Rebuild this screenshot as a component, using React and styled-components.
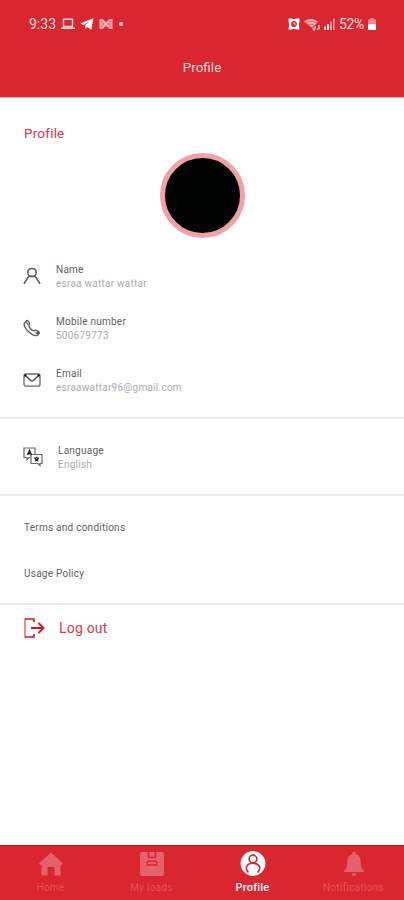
import React from 'react';
import styled, { createGlobalStyle } from 'styled-components';

const theme = {
  red: '#d9262f',
  edge: '#cb0b16',
  accent: '#d63a4c',
  label: '#606164',
  muted: '#a9adb5',
  line: '#ebebec',
  faded: '#e5626a',
};

const GlobalStyle = createGlobalStyle`
  * {
    box-sizing: border-box;
  }

  body {
    margin: 0;
    background: #fefefe;
    font-family: Roboto, 'Liberation Sans', sans-serif;
  }

  svg {
    display: block;
    flex-shrink: 0;
  }
`;

const Screen = styled.div`
  display: flex;
  flex-direction: column;
  width: 404px;
  height: 900px;
  overflow: hidden;
`;

const Header = styled.header`
  height: 98px;
  background: ${theme.red};
  border-bottom: 1px solid #f3aeb2;
  color: #fbdcde;
`;

const StatusBar = styled.div`
  display: flex;
  align-items: center;
  justify-content: space-between;
  height: 48px;
  padding: 0 28px 0 29px;
`;

const StatusGroup = styled.div`
  display: flex;
  align-items: center;
  gap: ${({ $gap }) => $gap}px;
`;

const StatusText = styled.span`
  font-size: 14px;
  line-height: 16px;
  letter-spacing: ${({ $tracking }) => $tracking || 0}px;
`;

const StatusDot = styled.span`
  width: 4px;
  height: 4px;
  margin-left: 1px;
  border-radius: 50%;
  background: currentColor;
`;

const HeaderTitle = styled.h1`
  margin: 0;
  text-align: center;
  font-size: 13.5px;
  font-weight: 400;
  line-height: 38px;
`;

const Content = styled.main`
  flex: 1;
`;

const PageTitle = styled.h2`
  margin: 0;
  padding: 27px 24px 12px;
  color: ${theme.accent};
  font-size: 13.5px;
  font-weight: 400;
  line-height: 16px;
  letter-spacing: 0.2px;
`;

const Avatar = styled.div`
  width: 85px;
  height: 85px;
  margin: 0 auto;
  border: 5px solid #f0a0a6;
  border-radius: 50%;
  background: #010403;
`;

const Section = styled.section`
  padding: ${({ $padding }) => $padding};
  border-bottom: 2px solid ${theme.line};
`;

const Row = styled.div`
  display: flex;
  align-items: center;
  gap: 15px;
  height: 52px;
`;

const RowText = styled.div`
  padding-top: 2px;
`;

const RowLabel = styled.div`
  color: ${theme.label};
  font-size: 10px;
  line-height: 14px;
  letter-spacing: 0.25px;
`;

const RowValue = styled(RowLabel)`
  color: ${theme.muted};
`;

const LinkRow = styled.div`
  display: flex;
  align-items: center;
  height: 46px;
  color: ${theme.label};
  font-size: 10px;
  letter-spacing: 0.25px;
`;

const LogoutRow = styled.div`
  display: flex;
  align-items: center;
  gap: 14px;
  height: 46px;
  padding: 0 23px;
  color: ${theme.accent};
  font-size: 14px;
  letter-spacing: 0.2px;
`;

const TabBar = styled.nav`
  display: grid;
  grid-template-columns: repeat(4, 1fr);
  height: 55px;
  background: ${theme.red};
  border-top: 1px solid ${theme.edge};
`;

const Tab = styled.div`
  display: flex;
  flex-direction: column;
  align-items: center;
  padding-top: 4px;
  color: ${({ $active }) => ($active ? '#fff' : theme.faded)};
`;

const TabLabel = styled.span`
  margin-top: 3px;
  font-size: ${({ $active }) => ($active ? 11 : 10)}px;
  font-weight: ${({ $active }) => ($active ? 500 : 400)};
  line-height: 14px;
  letter-spacing: ${({ $active }) => ($active ? 0.2 : 0.3)}px;
  opacity: ${({ $active }) => ($active ? 1 : 0.75)};
`;

const LaptopIcon = () => (
  <svg width="14" height="12" viewBox="0 0 14 12" fill="none" stroke="currentColor" strokeWidth="1.4">
    <path d="M2.5 1.2h9v7.3h-9zM0 10.3h14" />
  </svg>
);

const TelegramIcon = () => (
  <svg width="14" height="12" viewBox="0 0 14 12" fill="#fff">
    <path d="M0 5.5 13.5.3 11.2 11.8 7.3 9 5.4 11 5 7.5 10 3.1 3.8 6.9z" />
  </svg>
);

const MailBadgeIcon = () => (
  <svg width="14" height="12" viewBox="0 0 14 12">
    <path d="M.5 1h3l3.5 3 3.5-3h3v10h-3L7 8l-3.5 3h-3z" fill="currentColor" opacity=".75" />
    <path d="M3 2.5v7M11 2.5v7M4.8 4.5v3M9.2 4.5v3" stroke={theme.red} strokeWidth=".5" />
  </svg>
);

const AlarmIcon = () => (
  <svg width="12" height="12" viewBox="0 0 12 12">
    <path d="M.5.5h3L6 1.2 8.5.5h3v3l-.7 2.5.7 5.5h-3l-2.5-.7-2.5.7h-3L1.2 6 .5 3.5z" fill="#fff" />
    <circle cx="6" cy="6" r="2.9" fill={theme.red} />
    <path d="M6 4.2V6h1.8" fill="none" stroke="#fff" strokeWidth="1" />
  </svg>
);

const WifiIcon = () => (
  <svg width="16" height="13" viewBox="0 0 16 13">
    <path d="M0 3.5Q7-2 14 3.5L11.5 6.2 8 9.8z" fill="currentColor" opacity=".75" />
    <path d="M1.7 5.2Q7 1.7 12 5M4 7.2Q7 5.2 10 7" fill="none" stroke={theme.red} strokeWidth=".5" />
    <path d="m8.5 10 2 2 1-3.5M15 7v3.5l-2 1" fill="none" stroke="currentColor" strokeWidth="1.3" />
  </svg>
);

const SignalIcon = () => (
  <svg width="11" height="12" viewBox="0 0 11 12" fill="currentColor">
    <path d="M0 8.5h2V12H0zM3 6h2v6H3z" />
    <path d="M6 3.5h2V12H6zM9 .5h1.6V12H9z" opacity=".65" />
  </svg>
);

const BatteryIcon = () => (
  <svg width="8" height="12" viewBox="0 0 8 12">
    <path d="M2.2 0h3.6v1.5H8V12H0V1.5h2.2z" fill="#ed8b91" />
    <path d="M0 6h8v6H0z" fill="#fff" />
  </svg>
);

const PersonIcon = () => (
  <svg width="18" height="18" viewBox="0 0 18 18" fill="none" stroke="#55575a" strokeWidth="1.5">
    <circle cx="9" cy="5.6" r="4.2" />
    <path d="M1 16.8 4.5 11l2-1.7h5l2 1.7 3.5 5.8" />
  </svg>
);

const PhoneIcon = () => (
  <svg width="18" height="18" viewBox="0 0 18 18" fill="none" stroke="#55575a" strokeWidth="1.3">
    <path d="M1.3 4.2 3.7 1.5c1-.4 2.8 2.2 3.1 3.4.2 1-1.1 1.4-1 2.1.4 1.8 3.1 4.4 4.9 5 .8.2 1.2-1.1 2.2-.9 1.2.3 3.7 2 3.4 3.1l-2.1 2.2C9.7 18 .2 9.3 1.3 4.2z" />
    <path d="m12.4 13.5 3 1.2M3.3 3.4l2 2.5" />
    <circle cx="14.8" cy="14" r=".8" fill="#222" />
  </svg>
);

const EnvelopeIcon = () => (
  <svg width="18" height="18" viewBox="0 0 18 18" fill="none" stroke="#66686b" strokeWidth="1.3">
    <rect x="1" y="3" width="16" height="12.2" rx="2" />
    <path d="m2 4 5.4 5.2q1.6 1.4 3.2 0L16 4" stroke="#3f4143" />
    <path d="M1.3 4.5h2M14.7 4.5h2" stroke="#111" strokeWidth="1.8" />
  </svg>
);

const LanguageIcon = () => (
  <svg width="20" height="20" viewBox="0 0 20 20" fill="none" stroke="#66686b" strokeWidth="1.2">
    <path d="M7.5 10.5H6l-2 2v-2H1V1h11v6" />
    <path d="M8 7.5h11v9h-2v2l-2-2H8z" />
    <path d="M4.5 8 6.5 3.5 8.5 8M5.3 6.5h2.4" stroke="#222" strokeWidth="1.5" />
    <path d="M11 11h5M13.5 9.7V11M15.5 11q-.7 2.2-3.6 3.3M11.8 11.3q.8 1.7 3.6 3" stroke="#222" />
  </svg>
);

const LogoutIcon = () => (
  <svg width="22" height="20" viewBox="0 0 22 20" fill="none" stroke="#d51622">
    <path d="M2 .5v19" strokeWidth="1.5" opacity=".65" />
    <path d="M11 4V1H2M11 16v3H2" strokeWidth="1.7" />
    <path d="M8 10h12M15.5 5l5 5-5 5" strokeWidth="1.9" />
  </svg>
);

const HomeIcon = () => (
  <svg width="26" height="28" viewBox="0 0 26 28" fill="currentColor">
    <path d="M13 2.5 25 13.5l-1.3 1.3h-1.2v10.7h-6V17h-7v8.5h-6V14.8H2.3L1 13.5z" />
  </svg>
);

const LoadsIcon = () => (
  <svg width="26" height="28" viewBox="0 0 26 28">
    <rect x="1" y="2" width="24" height="24" rx="2" fill="currentColor" />
    <path d="M9.5 2v5.5h7V2" fill="none" stroke={theme.red} strokeWidth="1.5" />
    <rect x="8" y="11.2" width="10" height="3.8" rx="1" fill="none" stroke={theme.red} strokeWidth="1.4" />
  </svg>
);

const ProfileIcon = () => (
  <svg width="26" height="28" viewBox="0 0 26 28">
    <circle cx="13" cy="13.5" r="12.4" fill="#fff" />
    <circle cx="13" cy="9" r="3.9" fill="none" stroke={theme.red} strokeWidth="1.6" />
    <path d="M8.5 22.5c-4-3.8-2.3-9.2 4.5-9.2s8.5 5.4 4.5 9.2" fill="none" stroke={theme.red} strokeWidth="1.6" />
  </svg>
);

const BellIcon = () => (
  <svg width="26" height="28" viewBox="0 0 26 28" fill="currentColor">
    <path d="M11.5 4V2.5q1.5-1.5 3 0V4c3.5 1 5.3 4 5.3 8 0 5 1 7 3 8.2V22H3.2v-1.8c2-1.2 3-3.2 3-8.2 0-4 1.8-7 5.3-8z" />
    <path d="M10.5 23.2h5q-.4 2.5-2.5 2.5t-2.5-2.5z" />
  </svg>
);

const details = [
  { label: 'Name', value: 'esraa wattar wattar', icon: PersonIcon },
  { label: 'Mobile number', value: '500679773', icon: PhoneIcon },
  { label: 'Email', value: 'esraawattar96@gmail.com', icon: EnvelopeIcon },
];

const tabs = [
  { name: 'Home', icon: HomeIcon },
  { name: 'My loads', icon: LoadsIcon },
  { name: 'Profile', icon: ProfileIcon, active: true },
  { name: 'Notifications', icon: BellIcon },
];

const App = () => (
  <>
    <GlobalStyle />
    <Screen>
      <Header>
        <StatusBar>
          <StatusGroup $gap={5}>
            <StatusText>9:33</StatusText>
            <LaptopIcon />
            <TelegramIcon />
            <MailBadgeIcon />
            <StatusDot />
          </StatusGroup>
          <StatusGroup $gap={4}>
            <AlarmIcon />
            <WifiIcon />
            <SignalIcon />
            <StatusText $tracking={-0.3}>52%</StatusText>
            <BatteryIcon />
          </StatusGroup>
        </StatusBar>
        <HeaderTitle>Profile</HeaderTitle>
      </Header>

      <Content>
        <PageTitle>Profile</PageTitle>
        <Avatar />
        <Section $padding="12px 23px 11px">
          {details.map(({ label, value, icon: Icon }) => (
            <Row key={label}>
              <Icon />
              <RowText>
                <RowLabel>{label}</RowLabel>
                <RowValue>{value}</RowValue>
              </RowText>
            </Row>
          ))}
        </Section>
        <Section $padding="12px 23px 11px">
          <Row>
            <LanguageIcon />
            <RowText>
              <RowLabel>Language</RowLabel>
              <RowValue>English</RowValue>
            </RowText>
          </Row>
        </Section>
        <Section $padding="8px 24px 7px">
          <LinkRow>Terms and conditions</LinkRow>
          <LinkRow>Usage Policy</LinkRow>
        </Section>
        <LogoutRow>
          <LogoutIcon />
          Log out
        </LogoutRow>
      </Content>

      <TabBar>
        {tabs.map(({ name, icon: Icon, active }) => (
          <Tab key={name} $active={active}>
            <Icon />
            <TabLabel $active={active}>{name}</TabLabel>
          </Tab>
        ))}
      </TabBar>
    </Screen>
  </>
);

export default App;
